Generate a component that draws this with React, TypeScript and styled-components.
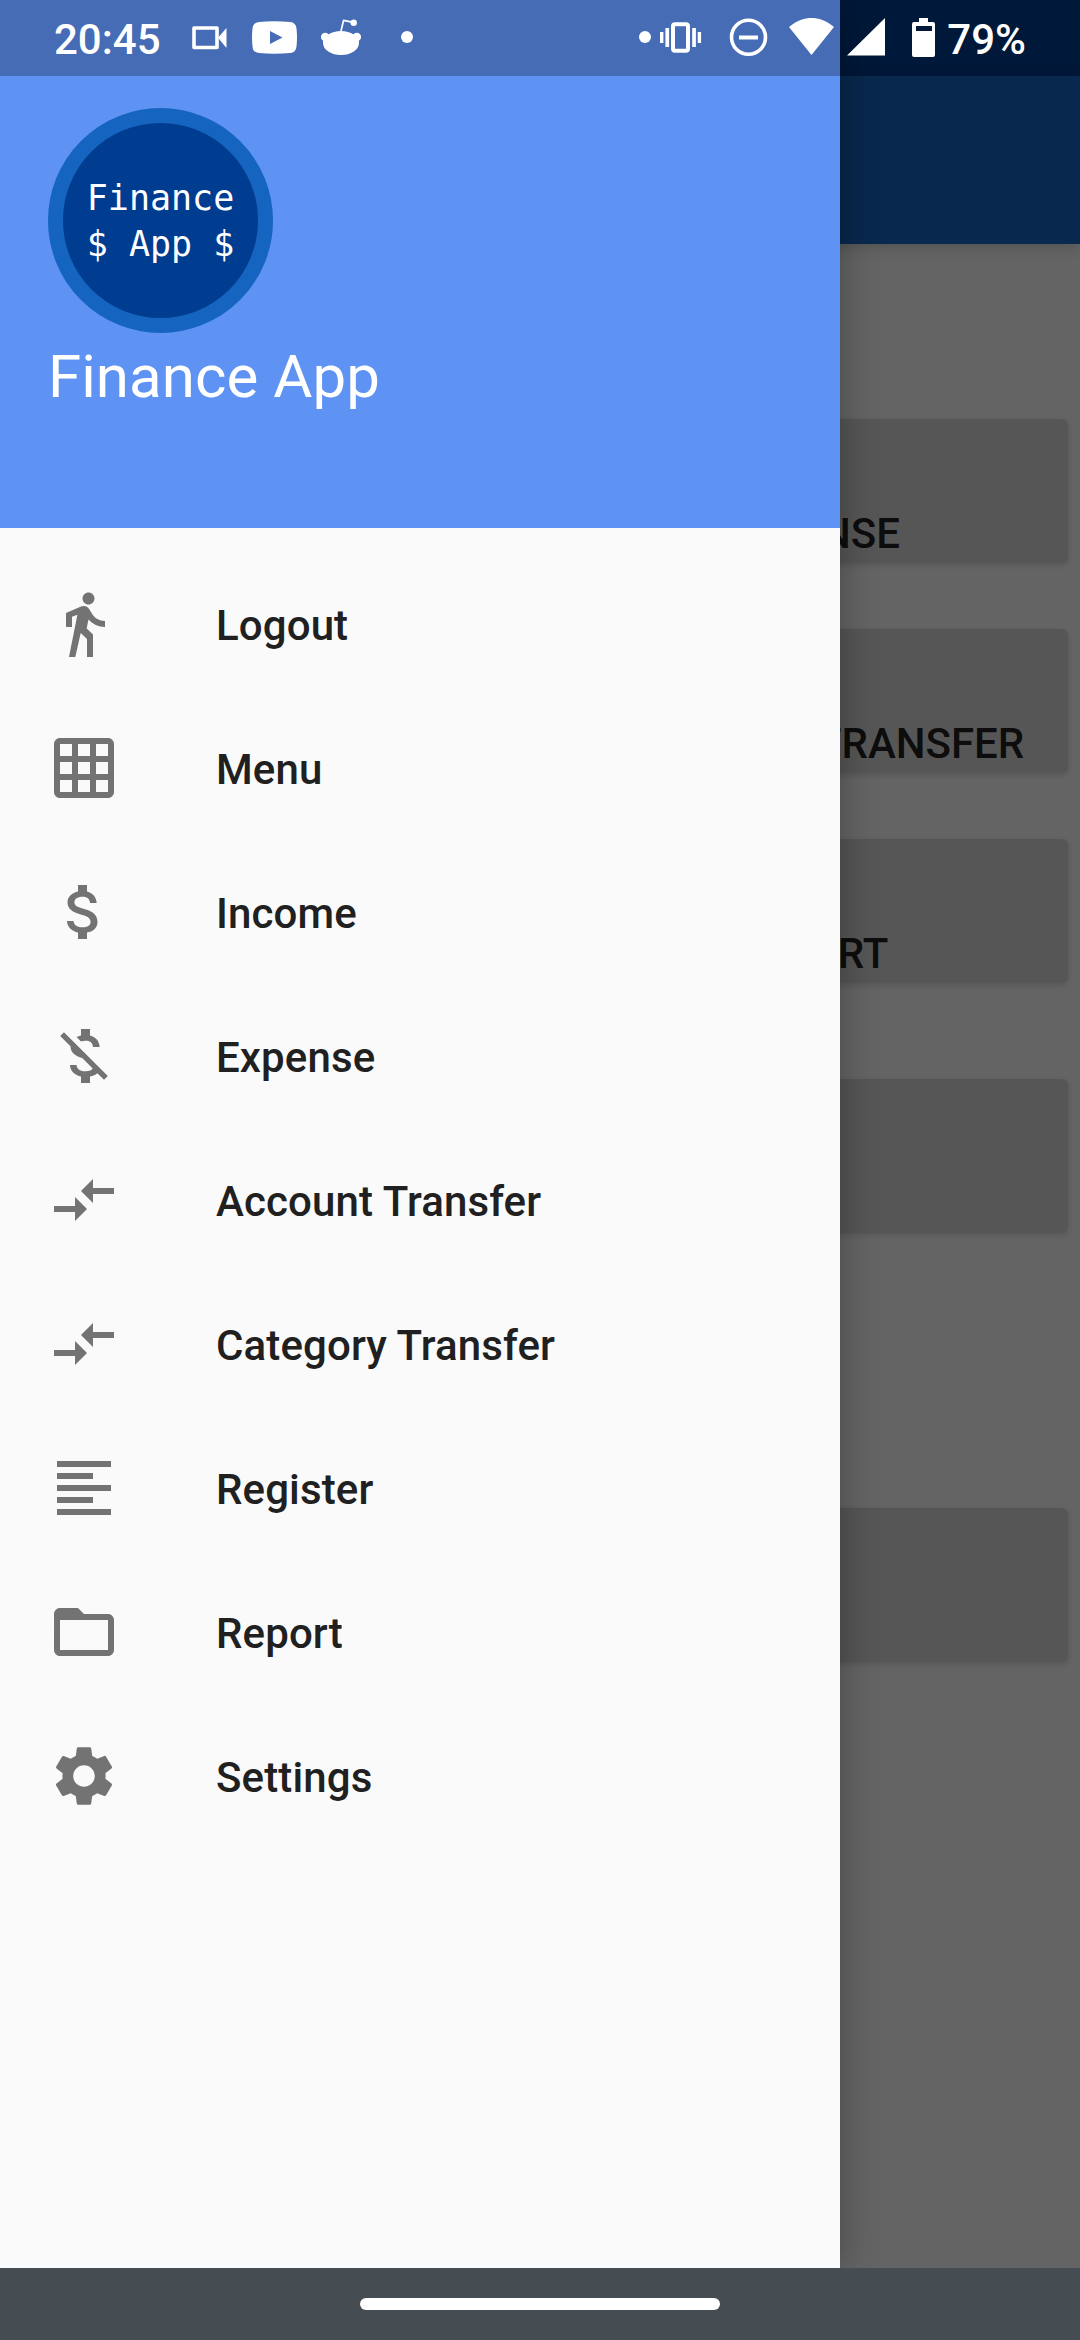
import React from "react";
import styled, { createGlobalStyle } from "styled-components";
import {
  MdAttachMoney,
  MdCompareArrows,
  MdDirectionsWalk,
  MdFolderOpen,
  MdFormatAlignLeft,
  MdGridOn,
  MdMoneyOff,
  MdSettings,
} from "react-icons/md";
import type { IconType } from "react-icons";

const GlobalStyle = createGlobalStyle`
  *, *::before, *::after { box-sizing: border-box; }
  html, body { margin: 0; padding: 0; }
  body { font-family: Roboto, "Noto Sans", sans-serif; background: #fafafa; }
`;

const Screen = styled.div`
  position: relative;
  width: 1080px;
  height: 2340px;
  overflow: hidden;
  background: #fafafa;
  display: flex;
  flex-direction: column;
`;

/* Main screen underneath the drawer */

const StatusBackdrop = styled.div`
  flex: none;
  height: 76px;
  background: #003c8f;
`;

const Toolbar = styled.header`
  flex: none;
  height: 168px;
  background: #1565c0;
  box-shadow: 0 4px 14px rgba(0, 0, 0, 0.17);
`;

const Content = styled.main`
  flex: 1;
  display: flex;
  flex-direction: column;
  padding: 175px 12px 0;
`;

const TileColumn = styled.div`
  display: flex;
  flex-direction: column;
  align-items: flex-end;
  gap: 66px;
`;

const Tile = styled.button`
  width: 520px;
  height: 144px;
  padding: 0 0 5px 4px;
  border: 0;
  border-radius: 6px;
  background: #d6d7d7;
  box-shadow: 0 2px 6px rgba(0, 0, 0, 0.15);
  color: rgba(0, 0, 0, 0.87);
  font: 500 42px/49px Roboto, "Noto Sans", sans-serif;
  display: flex;
  align-items: flex-end;
  justify-content: center;
  white-space: nowrap;
`;

const WideTile = styled.div<{ $top: number }>`
  flex: none;
  height: 154px;
  margin-top: ${(p) => p.$top}px;
  border-radius: 6px;
  background: #d6d7d7;
  box-shadow: 0 2px 6px rgba(0, 0, 0, 0.15);
`;

const Scrim = styled.div`
  position: absolute;
  inset: 0;
  background: rgba(0, 0, 0, 0.6);
`;

/* Navigation drawer */

const Drawer = styled.nav`
  position: absolute;
  top: 0;
  left: 0;
  bottom: 72px;
  width: 840px;
  background: #fafafa;
  box-shadow: 0 0 36px rgba(0, 0, 0, 0.3);
  display: flex;
  flex-direction: column;
`;

const DrawerHeader = styled.div`
  flex: none;
  height: 528px;
  padding: 108px 48px 0;
  background: #5e92f3;
  color: #fff;
`;

const Logo = styled.div`
  width: 225px;
  height: 225px;
  padding: 1px 0 0 0;
  border-radius: 50%;
  border: 15px solid #1565c0;
  background: #003c8f;
  color: #fff;
  font: 35px/46px "DejaVu Sans Mono", monospace;
  white-space: pre;
  display: flex;
  flex-direction: column;
  align-items: center;
  justify-content: center;
`;

const AppTitle = styled.h1`
  margin: 9px 0 0;
  font-size: 60px;
  line-height: 70px;
  font-weight: 400;
  letter-spacing: 0.06px;
`;

const MenuList = styled.ul`
  margin: 0;
  padding: 24px 0 0;
  list-style: none;
`;

const MenuItem = styled.li`
  height: 144px;
  padding-left: 48px;
  display: flex;
  align-items: center;
  gap: 96px;
  color: #202020;
  font-size: 42px;
  line-height: 49px;
  font-weight: 500;
  letter-spacing: 0.12px;

  svg {
    width: 72px;
    height: 72px;
    color: #737373;
  }
`;

const MenuLabel = styled.span`
  padding-top: 3px;
`;

/* System bars */

const StatusBar = styled.div`
  position: absolute;
  top: 0;
  left: 0;
  width: 1080px;
  height: 76px;
  display: flex;
  justify-content: space-between;
  padding: 0 54px;
  color: #fff;
`;

const StatusShade = styled.div`
  position: absolute;
  top: 0;
  left: 0;
  width: 840px;
  height: 76px;
  background: rgba(0, 0, 0, 0.26);
`;

const StatusGroup = styled.div`
  display: flex;
  align-items: flex-start;
`;

const StatusText = styled.span`
  padding-top: 15px;
  font-size: 42px;
  line-height: 50px;
  font-weight: 500;
`;

const StatusIcon = styled.svg<{ $gap?: number }>`
  flex: none;
  height: 76px;
  margin-left: ${(p) => p.$gap ?? 0}px;
  fill: #fff;
`;

const NavBar = styled.div`
  position: absolute;
  left: 0;
  right: 0;
  bottom: 0;
  height: 72px;
  background: #454d52;
  display: flex;
  align-items: center;
  justify-content: center;
`;

const HomePill = styled.div`
  width: 360px;
  height: 12px;
  border-radius: 6px;
  background: #fff;
`;

const tiles = ["EXPENSE", "CATEGORY TRANSFER", "REPORT"];

const menu: { label: string; Icon: IconType }[] = [
  { label: "Logout", Icon: MdDirectionsWalk },
  { label: "Menu", Icon: MdGridOn },
  { label: "Income", Icon: MdAttachMoney },
  { label: "Expense", Icon: MdMoneyOff },
  { label: "Account Transfer", Icon: MdCompareArrows },
  { label: "Category Transfer", Icon: MdCompareArrows },
  { label: "Register", Icon: MdFormatAlignLeft },
  { label: "Report", Icon: MdFolderOpen },
  { label: "Settings", Icon: MdSettings },
];

const VideoIcon = () => (
  <StatusIcon $gap={31} width="35" viewBox="192 0 35 76">
    <rect x="194" y="28" width="23" height="19.5" fill="none" stroke="#fff" strokeWidth="3.6" strokeLinejoin="round" />
    <path d="M218 37.7 L226.5 28 V48 Z" />
  </StatusIcon>
);

const YoutubeIcon = () => (
  <StatusIcon $gap={25} width="45" viewBox="252 0 45 76">
    <path
      fillRule="evenodd"
      d="M259 22 Q274.500 20.600 290 22 Q296 22.500 296.500 28.500 Q297.500 37.500 296.500 46.500 Q296 52.700 290 53 Q274.500 54.400 259 53 Q253 52.700 252.500 46.500 Q251.500 37.500 252.500 28.500 Q253 22.500 259 22 Z M270 31 V44 L282.500 37.500 Z"
    />
  </StatusIcon>
);

const RedditIcon = () => (
  <StatusIcon $gap={24} width="40" viewBox="321 0 40 76">
    <ellipse cx="341" cy="43" rx="18" ry="12" />
    <circle cx="325.200" cy="37" r="4.300" />
    <circle cx="356.800" cy="37" r="4.300" />
    <path d="M340.800 32 L343.600 20.300 L352 22.200" fill="none" stroke="#fff" strokeWidth="1.700" strokeLinejoin="round" />
    <circle cx="353.700" cy="22.700" r="3.200" />
  </StatusIcon>
);

const Dot = ({ gap }: { gap: number }) => (
  <StatusIcon $gap={gap} width="12" viewBox="0 0 12 76">
    <circle cx="6" cy="37" r="6" />
  </StatusIcon>
);

const VibrateIcon = () => (
  <StatusIcon $gap={9} width="42" viewBox="660 0 42 76">
    <rect x="673" y="24.200" width="15" height="26.600" rx="2" fill="none" stroke="#fff" strokeWidth="4" />
    <path d="M660 32h3.400v11h-3.400z M665.400 28h3.700v19h-3.700z M692.200 28h3.700v19h-3.700z M697.700 32h3.400v11h-3.400z" />
  </StatusIcon>
);

const DoNotDisturbIcon = () => (
  <StatusIcon $gap={27} width="39" viewBox="729 0 39 76">
    <circle cx="748.500" cy="37.300" r="17" fill="none" stroke="#fff" strokeWidth="3.600" />
    <path d="M739 35.500h19v4h-19z" />
  </StatusIcon>
);

const WifiIcon = () => (
  <StatusIcon $gap={21} width="45" viewBox="789 0 45 76">
    <path d="M789 27 C797 20.300 804.500 18 811.500 18 C818.500 18 826 20.300 834 27 L811.500 55 Z" />
  </StatusIcon>
);

const SignalIcon = () => (
  <StatusIcon $gap={13} width="38" viewBox="847 0 38 76">
    <path d="M847 55.500 L885 18 V55.500 Z" />
  </StatusIcon>
);

const BatteryIcon = () => (
  <StatusIcon $gap={27} width="23" viewBox="912 0 23 76">
    <path
      fillRule="evenodd"
      d="M919 18h9v4h5a2 2 0 0 1 2 2v31a2 2 0 0 1-2 2h-19a2 2 0 0 1-2-2v-31a2 2 0 0 1 2-2h5z M916 26v5h16v-5z"
    />
  </StatusIcon>
);

export default function App() {
  return (
    <Screen>
      <GlobalStyle />
      <StatusBackdrop />
      <Toolbar />
      <Content>
        <TileColumn>
          {tiles.map((label) => (
            <Tile key={label}>{label}</Tile>
          ))}
        </TileColumn>
        <WideTile $top={96} />
        <WideTile $top={275} />
      </Content>
      <Scrim />
      <Drawer>
        <DrawerHeader>
          <Logo>
            <span>Finance</span>
            <span>$ App $</span>
          </Logo>
          <AppTitle>Finance App</AppTitle>
        </DrawerHeader>
        <MenuList>
          {menu.map(({ label, Icon }) => (
            <MenuItem key={label}>
              <Icon />
              <MenuLabel>{label}</MenuLabel>
            </MenuItem>
          ))}
        </MenuList>
      </Drawer>
      <StatusShade />
      <StatusBar>
        <StatusGroup>
          <StatusText>20:45</StatusText>
          <VideoIcon />
          <YoutubeIcon />
          <RedditIcon />
          <Dot gap={40} />
        </StatusGroup>
        <StatusGroup>
          <Dot gap={0} />
          <VibrateIcon />
          <DoNotDisturbIcon />
          <WifiIcon />
          <SignalIcon />
          <BatteryIcon />
          <StatusIcon width="12" viewBox="0 0 12 76" />
          <StatusText>79%</StatusText>
        </StatusGroup>
      </StatusBar>
      <NavBar>
        <HomePill />
      </NavBar>
    </Screen>
  );
}
